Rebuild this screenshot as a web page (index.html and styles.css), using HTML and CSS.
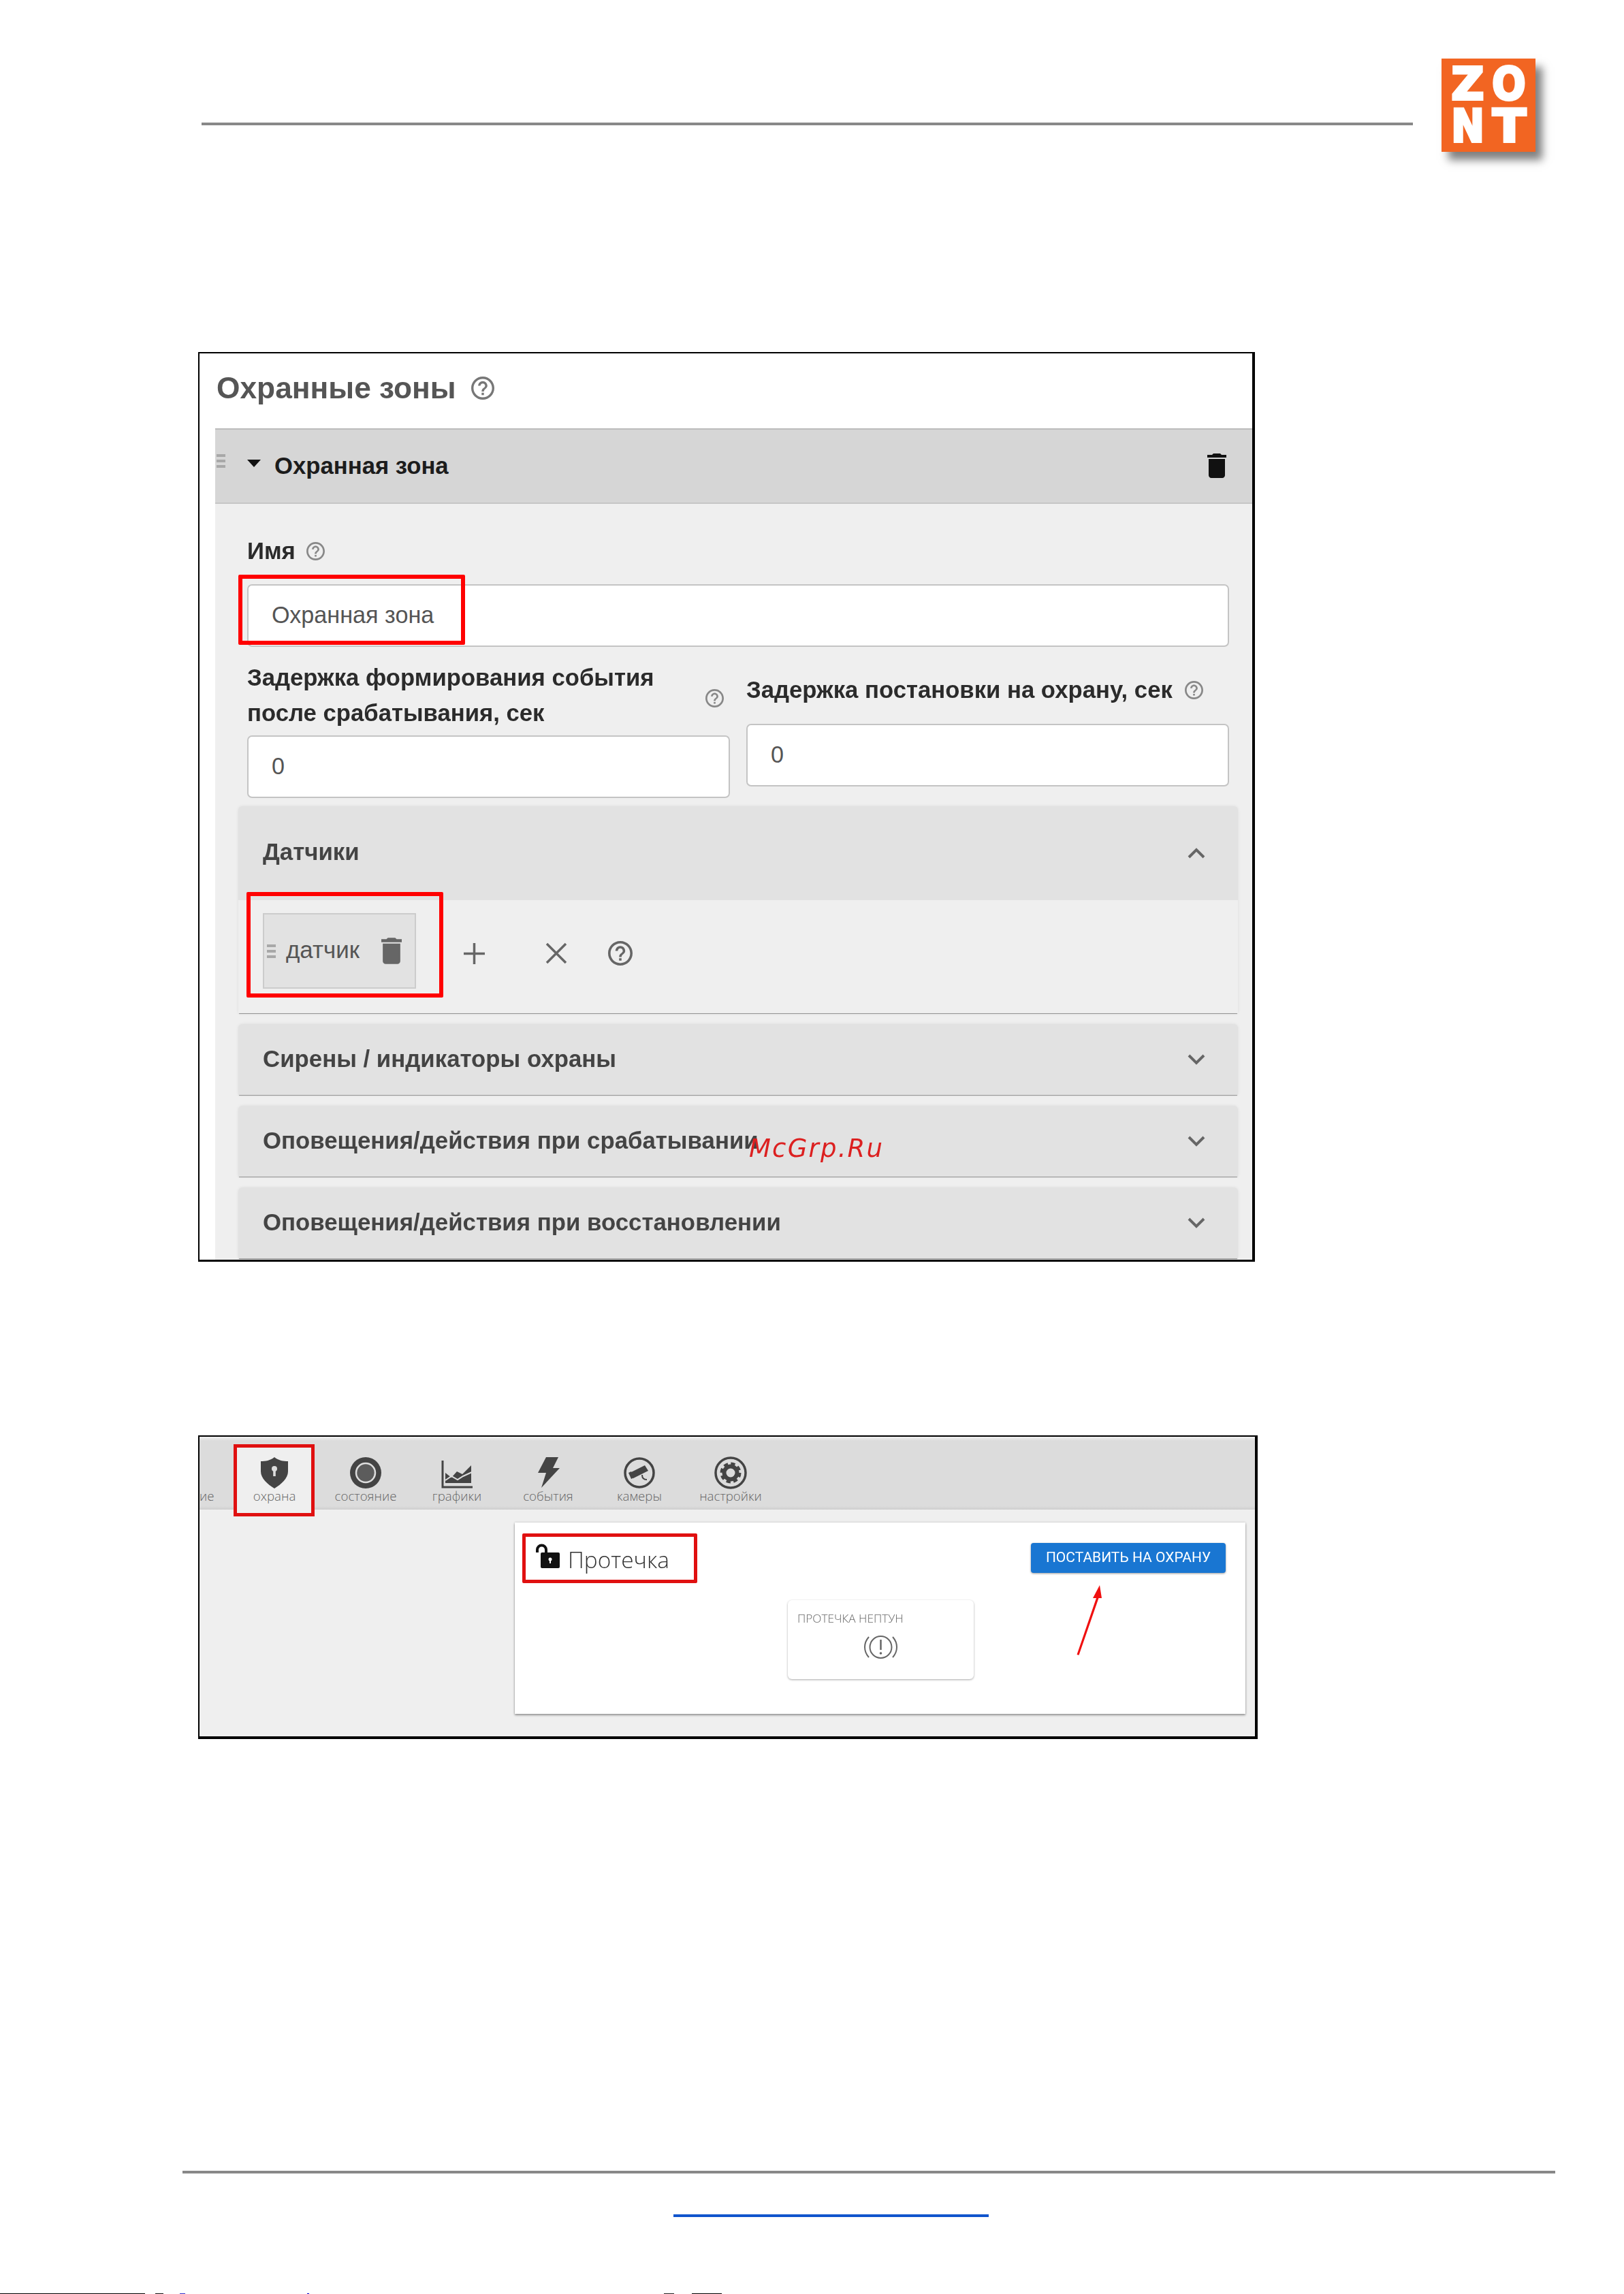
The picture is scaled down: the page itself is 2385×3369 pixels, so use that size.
FILE: index.html
```html
<!DOCTYPE html>
<html lang="ru">
<head>
<meta charset="utf-8">
<title>Охранные зоны</title>
<link rel="stylesheet" href="styles.css">
</head>
<body>
<svg class="defs" width="0" height="0" aria-hidden="true">
  <symbol id="i-help" viewBox="2 2 20 20"><path d="M11 18h2v-2h-2v2zm1-16C6.48 2 2 6.48 2 12s4.48 10 10 10 10-4.48 10-10S17.52 2 12 2zm0 18c-4.41 0-8-3.59-8-8s3.59-8 8-8 8 3.59 8 8-3.59 8-8 8zm0-14c-2.21 0-4 1.79-4 4h2c0-1.1.9-2 2-2s2 .9 2 2c0 2-3 1.75-3 5h2c0-2.25 3-2.5 3-5 0-2.21-1.79-4-4-4z"/></symbol>
  <symbol id="i-trash" viewBox="5 3 14 18"><path d="M6 19c0 1.1.9 2 2 2h8c1.1 0 2-.9 2-2V7H6v12zM19 4h-3.5l-1-1h-5l-1 1H5v2h14V4z"/></symbol>
  <symbol id="i-down" viewBox="0 0 26 16"><path d="M2 2l11 11L24 2" fill="none" stroke="currentColor" stroke-width="4"/></symbol>
  <symbol id="i-up" viewBox="0 0 26 16"><path d="M2 14L13 3l11 11" fill="none" stroke="currentColor" stroke-width="4"/></symbol>
</svg>
<div class="page">
  <header class="top">
    <div class="top-rule"></div>
    <div class="logo" role="img" aria-label="ZONT">
      <div class="logo-cell"><span class="logo-z">Z</span></div>
      <div class="logo-cell"><span class="logo-o">O</span></div>
      <div class="logo-cell"><span class="logo-n">N</span></div>
      <div class="logo-cell"><span class="logo-t">T</span></div>
    </div>
  </header>

  <section class="shot shot-zones">
    <div class="shot-inner">
      <div class="zones-title"><h1>Охранные зоны</h1><svg class="help help-title"><use href="#i-help"/></svg></div>
      <div class="zone">
        <div class="zone-head">
          <span class="drag drag-zone"><i></i><i></i><i></i></span>
          <span class="caret"></span>
          <span class="zone-name">Охранная зона</span>
          <svg class="zone-trash"><use href="#i-trash"/></svg>
        </div>
        <div class="zone-body">
          <div class="label-row name-label"><span class="label">Имя</span><svg class="help help-small"><use href="#i-help"/></svg></div>
          <div class="field name-field">Охранная зона<span class="mark mark-name"></span></div>
          <div class="delays">
            <div class="delay delay-left">
              <div class="label-row label-two"><span class="label">Задержка формирования события<br>после срабатывания, сек</span><svg class="help help-small"><use href="#i-help"/></svg></div>
              <div class="field">0</div>
            </div>
            <div class="delay delay-right">
              <div class="label-row label-one"><span class="label">Задержка постановки на охрану, сек</span><svg class="help help-small"><use href="#i-help"/></svg></div>
              <div class="field">0</div>
            </div>
          </div>
          <div class="acc acc-open">
            <div class="acc-head acc-head-tall"><span>Датчики</span><svg class="chev"><use href="#i-up"/></svg></div>
            <div class="acc-body">
              <div class="chip">
                <span class="drag drag-chip"><i></i><i></i><i></i></span>
                <span class="chip-text">датчик</span>
                <svg class="chip-trash"><use href="#i-trash"/></svg>
                <span class="mark mark-chip"></span>
              </div>
              <svg class="tool tool-plus" viewBox="0 0 31 31"><path d="M15.5 0v31M0 15.5h31" stroke="currentColor" stroke-width="3.5"/></svg>
              <svg class="tool tool-x" viewBox="0 0 32 32"><path d="M2 2l28 28M30 2L2 30" stroke="currentColor" stroke-width="3.5"/></svg>
              <svg class="tool tool-help"><use href="#i-help"/></svg>
            </div>
          </div>
          <div class="acc"><div class="acc-head"><span>Сирены / индикаторы охраны</span><svg class="chev"><use href="#i-down"/></svg></div></div>
          <div class="acc"><div class="acc-head"><span>Оповещения/действия при срабатывании</span><svg class="chev"><use href="#i-down"/></svg></div></div>
          <div class="acc"><div class="acc-head"><span>Оповещения/действия при восстановлении</span><svg class="chev"><use href="#i-down"/></svg></div></div>
        </div>
      </div>
    </div>
    <span class="watermark">McGrp.Ru</span>
  </section>

  <section class="shot shot-guard">
    <div class="shot-inner">
      <nav class="nav">
        <div class="nav-cut">ие</div>
        <div class="nav-item nav-active">
          <span class="mark-tab"></span>
          <svg class="nav-icon" viewBox="0 0 48 48"><path d="M24 1c6 5 13 6 20 6v15c0 10-10 19-20 25C14 41 4 32 4 22V7c7 0 14-1 20-6z" fill="#444"/><circle cx="24" cy="18" r="4" fill="#ddd"/><rect x="22.200" y="18" width="3.600" height="11" fill="#ddd"/></svg>
          <span>охрана</span>
        </div>
        <div class="nav-item">
          <svg class="nav-icon" viewBox="0 0 48 48"><circle cx="24" cy="24" r="23" fill="#444"/><circle cx="24" cy="24" r="14" fill="#5c5c5c" stroke="#ddd" stroke-width="2.5"/></svg>
          <span>состояние</span>
        </div>
        <div class="nav-item">
          <svg class="nav-icon" viewBox="0 0 48 48"><path d="M3 6v39h44" fill="none" stroke="#444" stroke-width="3"/><path d="M7 24l9 7 8-9 8 4 13-13v26H7z" fill="#444"/><path d="M7 35l9-6 9 5 8-5 13-6" fill="none" stroke="#ddd" stroke-width="2"/></svg>
          <span>графики</span>
        </div>
        <div class="nav-item">
          <svg class="nav-icon" viewBox="0 0 48 48"><path d="M21 1h18l-8 16h10L14 46l7-22H9z" fill="#444"/></svg>
          <span>события</span>
        </div>
        <div class="nav-item">
          <svg class="nav-icon" viewBox="0 0 48 48"><circle cx="24" cy="24" r="21" fill="none" stroke="#444" stroke-width="3.5"/><path d="M10 24l22-11 5 8-22 11z" fill="#444"/><path d="M8 24l4 9 4-2-4-9z" fill="#444"/><path d="M28 27c0 5 3 7 7 7" fill="none" stroke="#444" stroke-width="2"/></svg>
          <span>камеры</span>
        </div>
        <div class="nav-item">
          <svg class="nav-icon" viewBox="0 0 48 48"><circle cx="24" cy="24" r="22" fill="none" stroke="#444" stroke-width="3.5"/><circle cx="24" cy="24" r="13" fill="none" stroke="#444" stroke-width="5" stroke-dasharray="6 4.2"/><circle cx="24" cy="24" r="9.5" fill="none" stroke="#444" stroke-width="6"/></svg>
          <span>настройки</span>
        </div>
      </nav>
      <main class="guard-main">
        <div class="guard-card">
          <div class="guard-head">
            <div class="guard-title">
              <svg class="lock" viewBox="0 0 37 36"><path d="M3 13V9a6.500 6.500 0 0 1 13 0v6" fill="none" stroke="#111" stroke-width="4"/><rect x="8" y="13" width="28" height="23" rx="2" fill="#111"/><circle cx="22" cy="23" r="2.500" fill="#fff"/><rect x="21" y="23" width="2" height="6" fill="#fff"/></svg>
              <span>Протечка</span>
              <span class="mark mark-title"></span>
            </div>
            <button class="arm">ПОСТАВИТЬ НА ОХРАНУ</button>
          </div>
          <div class="sensor">
            <div class="sensor-name">ПРОТЕЧКА НЕПТУН</div>
            <svg class="sensor-icon" viewBox="0 0 51 40"><circle cx="25.500" cy="20" r="16" fill="none" stroke="#666" stroke-width="2"/><path d="M8 5C0 14 0 26 8 35M43 5c8 9 8 21 0 30" fill="none" stroke="#666" stroke-width="2"/><path d="M25.500 9v15" stroke="#666" stroke-width="2.500"/><circle cx="25.500" cy="29" r="1.800" fill="#666"/></svg>
          </div>
          <svg class="arrow" viewBox="0 0 45 106"><path d="M40 2L30 21h5L6.500 104l3 .8L38.500 21H43z" fill="#f01010"/></svg>
        </div>
      </main>
    </div>
  </section>

  <div class="foot-rule"></div>
  <div class="foot-link"></div>
  <div class="scan-strip"></div>
</div>
</body>
</html>
```
FILE: styles.css
```css
* { box-sizing: border-box; }
html, body { margin: 0; padding: 0; background: #fff; }
body { font-family: "Liberation Sans", Arial, sans-serif; }
.defs { position: absolute; }
.page { width: 2385px; height: 3369px; overflow: hidden; background: #fff; }

.top { display: flex; align-items: flex-start; padding-left: 296px; height: 223px; }
.top-rule { width: 1779px; height: 4px; margin-top: 180px; background: #888; }
.logo { display: grid; grid-template-columns: 61px 61px; grid-auto-rows: 62px; flex: none; width: 138px; height: 137px; padding: 7px 8px; margin-top: 86px; margin-left: 42px; background: #f26522; box-shadow: 10px 12px 12px rgba(0,0,0,.5); filter: blur(.6px); }
.logo-cell { text-align: center; font: 700 66px/62px "DejaVu Sans", sans-serif; color: #fff; -webkit-text-stroke: 4px #fff; }
.logo-cell span { display: inline-block; }
.logo-z { transform: scaleX(1); }
.logo-o { transform: scaleX(.88); }
.logo-n { transform: scaleX(.88); }
.logo-t { transform: scaleX(1.08); }

.shot { position: relative; margin-left: 291px; border-style: solid; border-color: #000; overflow: hidden; }
.shot-inner { height: 100%; filter: blur(.5px); }
.shot-zones { width: 1552px; height: 1336px; margin-top: 294px; border-width: 2px 4px 3px 2px; background: #fff; }
.shot-guard { width: 1556px; height: 446px; margin-top: 255px; border-width: 2px 4px 4px 2px; background: #efefef; }

.help { fill: #777; display: block; flex: none; }
.help-title { width: 34px; height: 34px; }
.help-small { width: 27px; height: 27px; fill: #888; }

.zones-title { display: flex; align-items: center; height: 110px; padding: 0 0 8px 25px; gap: 22px; }
.zones-title h1 { margin: 0; font-size: 44.3px; font-weight: 700; color: #555; }

.zone { margin-left: 23px; }
.zone-head { display: flex; align-items: center; height: 111px; background: #d6d6d6; border-top: 2px solid #bcbcbc; border-bottom: 2px solid #c6c6c6; color: #1c1c1c; position: relative; }
.drag { display: flex; flex-direction: column; gap: 4px; width: 13px; flex: none; }
.drag i { display: block; height: 4px; background: #a8a8a8; }
.drag-zone { position: absolute; left: 2px; top: 36px; }
.caret { width: 0; height: 0; margin-left: 47px; margin-top: -8px; border-left: 10px solid transparent; border-right: 10px solid transparent; border-top: 11px solid #111; }
.zone-name { margin-left: 20px; font-size: 34.7px; font-weight: 700; }
.zone-trash { width: 30px; height: 36px; margin-left: auto; margin-right: 37px; margin-top: -2px; fill: #111; }

.zone-body { height: 1200px; padding: 48px 34px 0 47px; background: #efefef; }
.label { font-size: 34.7px; font-weight: 700; line-height: 52px; color: #2b2b2b; }
.label-row { display: flex; align-items: center; }
.name-label { height: 42px; margin-bottom: 28px; gap: 16px; }
.field { position: relative; display: flex; align-items: center; height: 92px; padding: 0 0 2px 34px; background: #fff; border: 2px solid #c4c4c4; border-radius: 7px; font-size: 34.2px; color: #555; }
.delays { display: grid; grid-template-columns: 709px 709px; column-gap: 24px; }
.delay-left { padding-top: 19px; }
.delay-right { padding-top: 37px; }
.label-two { justify-content: space-between; padding-right: 9px; margin-bottom: 7px; }
.label-two .help { margin-top: 8px; }
.label-one { gap: 18px; margin-bottom: 24px; }

.acc { margin: 16px -13px 0; background: #e2e2e2; border-radius: 6px 6px 0 0; box-shadow: 0 2px 1px -1px #8e8e8e, 0 0 4px rgba(0,0,0,.08); }
.acc-open { margin-top: 12px; }
.acc-head { display: flex; align-items: center; justify-content: space-between; height: 104px; padding: 0 48px 0 36px; font-size: 34.8px; font-weight: 700; color: #444; }
.acc-head span { margin-bottom: 3px; }
.acc-head-tall { height: 138px; }
.acc-head-tall span { margin-bottom: 5px; }
.chev { width: 26px; height: 16px; color: #666; flex: none; }
.acc-body { display: flex; align-items: center; height: 166px; padding: 19px 0 36px 36px; background: #efefef; color: #666; fill: #666; }
.chip { position: relative; display: flex; align-items: center; width: 225px; height: 111px; padding: 0 19px 0 4px; background: #e2e2e2; border: 2px solid #ccc; flex: none; }
.drag-chip { margin-right: 15px; }
.chip-text { font-size: 34.9px; color: #555; margin-bottom: 3px; }
.chip-trash { width: 30px; height: 39px; margin-left: auto; fill: #666; }
.tool { display: block; flex: none; margin-top: 7px; }
.tool-plus { width: 31px; height: 31px; margin-left: 70px; }
.tool-x { width: 32px; height: 32px; margin-left: 89px; }
.tool-help { width: 36px; height: 36px; margin-left: 60px; }

.mark { position: absolute; border: 6px solid #f00; border-radius: 2px; pointer-events: none; }
.mark-name { left: -15px; top: -16px; width: 333px; height: 103px; }
.mark-chip { left: -26px; top: -33px; width: 289px; height: 155px; }
.mark-title { left: -19px; top: -14px; width: 257px; height: 73px; border-width: 5px; border-color: #e01010; }

.watermark { position: absolute; left: 807px; top: 1146px; font: italic 400 37px "DejaVu Sans", sans-serif; letter-spacing: 2.2px; color: #dc2020; white-space: nowrap; }

.nav { display: flex; height: 107px; padding-top: 29px; background: linear-gradient(#f0f0f0, #dcdcdc 6px, #dcdcdc 102px, #cecece); font-family: "Open Sans", sans-serif; font-weight: 300; font-size: 18.7px; color: #666; }
.nav-cut { width: 43px; padding-top: 48px; line-height: 20px; }
.nav-item { position: relative; display: flex; flex-direction: column; align-items: center; width: 134px; line-height: 20px; }
.nav-item > span:not(.mark-tab), .nav-icon { position: relative; }
.nav-icon { width: 48px; height: 48px; display: block; }
.mark-tab { position: absolute; left: 7px; top: -18px; width: 119px; height: 106px; border: 5px solid #e01010; background: #efefef; }

.guard-main { padding: 19px 0 0 463px; }
.guard-card { position: relative; width: 1073px; height: 281px; padding: 30px 29px 0 30px; background: #fff; box-shadow: 0 2px 3px rgba(0,0,0,.35), 0 0 3px rgba(0,0,0,.2); }
.guard-head { display: flex; justify-content: space-between; align-items: flex-start; height: 84px; }
.guard-title { position: relative; display: flex; align-items: flex-start; gap: 11px; font-family: "Open Sans", sans-serif; font-weight: 300; font-size: 33.4px; line-height: 48px; color: #333; }
.lock { width: 37px; height: 36px; margin-top: 1px; flex: none; }
.arm { width: 286px; height: 44px; padding: 0 0 2px; border: 0; border-radius: 4px; background: #1976d2; color: #fff; font-family: "Roboto", sans-serif; font-size: 21px; box-shadow: 0 1px 3px rgba(0,0,0,.4); }
.sensor { width: 273px; height: 116px; margin-left: 371px; padding: 16px 14px 0; background: #fff; border-radius: 6px; box-shadow: 0 1px 3px rgba(0,0,0,.35); }
.sensor-name { font-family: "Open Sans", sans-serif; font-weight: 300; font-size: 17.2px; line-height: 22px; color: #666; white-space: nowrap; }
.sensor-icon { display: block; width: 51px; height: 40px; margin: 11px auto 0; }
.arrow { position: absolute; left: 819px; top: 90px; width: 45px; height: 106px; }

.foot-rule { width: 2016px; height: 4px; margin: 634px 0 0 268px; background: #888; }
.foot-link { width: 463px; height: 4px; margin: 60px 0 0 989px; background: #1155cc; }
.scan-strip { height: 1px; margin-top: 112px; background: linear-gradient(90deg, #000 0 213px, transparent 213px 228px, #111 228px 240px, transparent 240px 264px, #33c 264px 272px, transparent 272px 451px, #00c 451px 454px, transparent 454px 975px, #222 975px 990px, transparent 990px 1016px, #000 1016px 1060px, transparent 1060px); }
```
